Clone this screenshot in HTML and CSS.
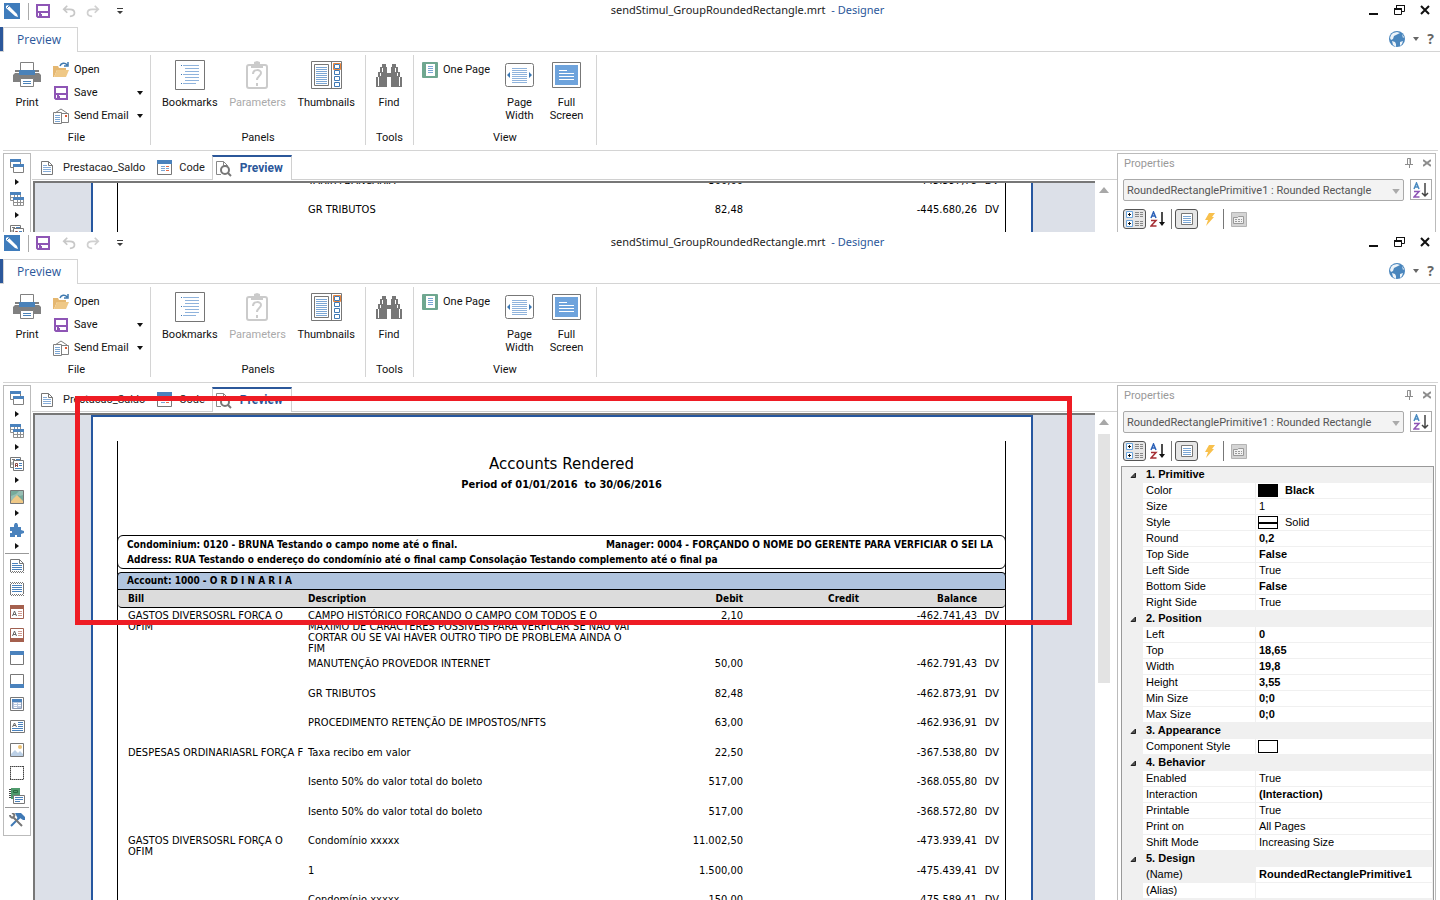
FILE: index.html
```html
<!DOCTYPE html>
<html lang="en">
<head>
<meta charset="utf-8">
<title>sendStimul_GroupRoundedRectangle.mrt - Designer</title>
<link rel="stylesheet" href="styles.css">
<script src="script.js" defer></script>
</head>
<body>
<svg class="sprite" aria-hidden="true">
  <symbol id="i-app" viewBox="0 0 16 16"><path fill="#3f7cbc" d="M0 0h16v16H0z"/><path fill="#fff" d="M2 3l2-1 9 9 1 3-3-1-9-8z"/><path stroke="#3f7cbc" d="M3 5l2-2"/></symbol>
  <symbol id="i-save" viewBox="0 0 16 16"><path fill="none" stroke="#8e55b5" stroke-width="2" d="M2 2h12v12H3l-1-1z"/><path fill="#8e55b5" d="M2 8h12v2H2zM4 10h2v4H4zM6 11h1v3H6z"/></symbol>
  <symbol id="i-undo" viewBox="0 0 16 16"><path fill="none" stroke="#c8c8c8" stroke-width="2" d="M6 2L2 6l4 4M2 6h7c7 0 7 8 0 8"/></symbol>
  <symbol id="i-redo" viewBox="0 0 16 16"><path fill="none" stroke="#d0d0d0" stroke-width="2" d="M10 2l4 4-4 4M14 6H7c-7 0-7 8 0 8"/></symbol>
  <symbol id="i-custom" viewBox="0 0 8 8"><path fill="#3c3c3c" d="M1 1h6v1H1zM1 4h6L4 7z"/></symbol>
  <symbol id="i-min" viewBox="0 0 12 12"><path fill="#111" d="M2 9h9v2H2z"/></symbol>
  <symbol id="i-restore" viewBox="0 0 12 12"><path fill="none" stroke="#111" d="M1.500 4.500h7v6h-7zM3.500 4V1.500h8v6H9"/><path fill="#111" d="M1 4h8v2H1zM3 1h9v1H3z"/></symbol>
  <symbol id="i-close" viewBox="0 0 12 12"><path fill="none" stroke="#111" stroke-width="2" d="M2 2l8 8M10 2l-8 8"/></symbol>
  <symbol id="i-globe" viewBox="0 0 16 16"><circle cx="8" cy="8" r="8" fill="#4a86bd"/><path fill="#eef4f9" d="M2 4l2-2 4-1 3 1-2 1-2 1-2 1-1 3-2 1-1-2zM3 10l3 1 1 2v3l-3-2zM11 11l3-1-1 3-2 2zM13 3l2 3-1 1z"/></symbol>
  <symbol id="i-print" viewBox="0 0 28 26"><path fill="#808080" d="M0 13l2-2h24l2 2v7H0zM2 10h4V8H2zM22 10h4V8h-4z"/><path fill="#fff" stroke="#808080" d="M7.500.5h13v9h-13z"/><path fill="#4a82b9" d="M6 8h16v5H6z"/><path fill="#fff" stroke="#808080" d="M7.500 16.500h13v8h-13z"/><path fill="#4a82b9" d="M10 19h8v1h-8zM10 21h8v1h-8z"/></symbol>
  <symbol id="i-open" viewBox="0 0 16 16"><path fill="#e5b770" d="M0 4h5l1 2h7v2H4L1 15H0z"/><path fill="#efc886" d="M4 8h12l-3 7H1z"/><path fill="none" stroke="#3f79b0" stroke-width="1.500" d="M7 4c1-3 5-4 7-1M15 0v4h-4"/></symbol>
  <symbol id="i-mail" viewBox="0 0 16 16"><path fill="none" stroke="#808080" d="M2 5l6-4 6 4M9 5.500h6.500v9H9M.5 4.500h8v11h-8z"/><path stroke="#7ba6d4" d="M2 7.500h5M2 9.500h5M2 11.500h5M2 13.500h5"/><path fill="#e05a33" d="M12 7h2v2h-2z"/></symbol>
  <symbol id="i-bookmarks" viewBox="0 0 30 30"><path fill="#fff" stroke="#757575" d="M.5.5h29v29H.5z"/><path stroke="#8fb3dc" d="M8 5.500h16M10 8.500h14M10 11.500h14M8 14.500h16M10 17.500h14M10 20.500h14M8 23.500h13"/><path stroke="#3b77b3" d="M6 5.500h1M6 14.500h1M6 23.500h1"/></symbol>
  <symbol id="i-params" viewBox="0 0 22 28"><rect x="1" y="4" width="20" height="23" rx="2" fill="none" stroke="#cbcbcb" stroke-width="2"/><path fill="#cbcbcb" d="M5 4h3V1l3-1 3 1v3h3v3H5z"/><path fill="none" stroke="#cbcbcb" stroke-width="2" d="M7 13c0-5 8-5 8-1 0 3-4 3-4 7M11 22v3"/></symbol>
  <symbol id="i-thumbs" viewBox="0 0 31 28"><path fill="#fff" stroke="#777" d="M.5.5h30v27H.5zM20.500.5v27M3.500 3.500h14v21h-14z"/><path stroke="#7ba6d4" d="M5 6.500h11M5 8.500h11M5 10.500h11M5 12.500h11M5 14.500h11M5 16.500h11M5 18.500h11M5 20.500h11M5 22.500h11"/><path fill="#fff" stroke="#3f79b5" d="M23.500 3.500h5v4h-5zM23.500 9.500h5v4h-5zM23.500 15.500h5v4h-5zM23.500 21.500h5v4h-5z"/><path fill="none" stroke="#e8833a" d="M22.500 2.500h7v6h-7z"/></symbol>
  <symbol id="i-find" viewBox="0 0 26 24"><path fill="#777" d="M6 1h4v3h1v6h4V4h1V1h4v3h2v5h2v5h2v10H15V14h-4v10H0V14h2V9h2V4h2z"/><path fill="none" stroke="#fff" d="M6.500 5v4M4.500 10v3M2.500 14v9M19.500 5v4M21.500 10v3M23.500 14v9"/></symbol>
  <symbol id="i-onepage" viewBox="0 0 16 16"><rect width="16" height="16" rx="1" fill="#6fa790"/><path fill="#fff" d="M4 2h9v12H4z"/><path stroke="#7ba6d4" d="M6 4.500h5M6 6.500h5M6 8.500h5M6 10.500h5"/></symbol>
  <symbol id="i-width" viewBox="0 0 29 24"><rect x=".5" y=".5" width="28" height="23" rx="2" fill="#fff" stroke="#777"/><path stroke="#8fb3dc" d="M7 5.500h15M7 7.500h15M7 9.500h15M7 11.500h15M7 13.500h15M7 15.500h15M7 17.500h15M7 19.500h15"/><path fill="#3b77b3" d="M5 9v6l-3-3zM24 9v6l3-3z"/></symbol>
  <symbol id="i-full" viewBox="0 0 29 26"><path fill="#fff" stroke="#777" d="M.5.5h28v25H.5z"/><path fill="#6ea3dc" d="M3 3h23v20H3z"/><path stroke="#fff" d="M7 8.500h8M7 11.500h15M7 14.500h15M7 17.500h15"/></symbol>
  <symbol id="i-doc" viewBox="0 0 12 14"><path fill="#fff" stroke="#777" d="M.5.5h7l4 4v9H.5zM7.500.5v4h4"/><path stroke="#86acd8" d="M2 4.500h4M2 6.500h8M2 8.500h8M2 10.500h8"/></symbol>
  <symbol id="i-code" viewBox="0 0 16 15"><path fill="#fff" stroke="#777" d="M.5.5h14v14H.5z"/><path fill="#4a82bd" d="M0 0h15v4H0z"/><path stroke="#7ba6d4" d="M4 6.500h4M4 8.500h4M4 10.500h4"/><path stroke="#e36b48" d="M9 6.500h3M9 10.500h3"/><path stroke="#7ba6d4" d="M9 8.500h3"/></symbol>
  <symbol id="i-preview" viewBox="0 0 16 16"><path fill="#fff" stroke="#888" d="M5 13.500H.5V.5h7l4 4V6M7.500.5v4h4"/><circle cx="9" cy="9" r="4" fill="#fff" stroke="#777" stroke-width="2"/><path stroke="#777" stroke-width="2" d="M12 12l3 3"/></symbol>
  <symbol id="i-bands" viewBox="0 0 14 14"><path fill="#fff" stroke="#808080" d="M.5.5h10v8H.5z"/><path fill="#4a82bd" d="M0 0h11v3H0z"/><path fill="#fff" stroke="#808080" d="M3.500 5.500h10v8h-10z"/><path fill="#4a82bd" d="M3 5h11v3H3z"/></symbol>
  <symbol id="i-tables" viewBox="0 0 14 14"><path fill="#fff" stroke="#909090" d="M.5.5h10v8H.5zM0 5.500h10M4.500 3v6M7.500 3v6"/><path fill="#4a82bd" d="M0 0h11v3H0z"/><path fill="#fff" stroke="#909090" d="M3.500 5.500h10v8h-10zM3 10.500h10M7.500 8v6M10.500 8v6"/><path fill="#4a82bd" d="M3 5h11v3H3z"/></symbol>
  <symbol id="i-comps" viewBox="0 0 14 14"><path fill="#fff" stroke="#777" d="M.5.5h10v10H.5zM2 2.500h3M2 5v3"/><path stroke="#4a82bd" d="M6 2.500h4"/><path fill="#fff" stroke="#777" d="M3.500 3.500h10v10h-10z"/><path fill="none" stroke="#8b4b45" d="M5.500 10V6.500h2V10M5 8.500h3"/><path stroke="#4a82bd" d="M9 6.500h3M9 8.500h3M5 11.500h7"/></symbol>
  <symbol id="i-image" viewBox="0 0 14 14"><path fill="#76aa9b" stroke="#777" d="M.5.5h13v13H.5z"/><path fill="#fff" d="M1 6l5-2 3-3h4v4l-3 1-2-1-4 4-3 1z" opacity=".25"/><path fill="#efc886" d="M1 13v-2l6-6 6 6v2z"/></symbol>
  <symbol id="i-puzzle" viewBox="0 0 14 14"><path fill="#4a82bd" d="M0 4h4V2l1-2h2l1 2v2h3v3l3 1v2l-3 1v3H7v-2H5v2H0v-4h2V8H0z"/></symbol>
  <symbol id="i-text" viewBox="0 0 14 14"><path fill="#fff" stroke="#777" d="M.5 12V.5h9l4 4V12M9.500.5v4h4"/><path stroke="#4a82bd" d="M2 4.500h6M2 6.500h10M2 8.500h10M2 10.500h10"/><path stroke="#777" stroke-dasharray="1 1" d="M0 12.500h14M1 13.500h13"/></symbol>
  <symbol id="i-text2" viewBox="0 0 14 14"><path fill="#fff" stroke="#777" d="M.5 2v10M13.500 2v10"/><path stroke="#777" stroke-dasharray="1 1" d="M0 .5h14M1 1.500h13M0 12.500h14M1 13.500h13"/><path stroke="#4a82bd" d="M2 3.500h10M2 5.500h10M2 7.500h10M2 9.500h10"/></symbol>
  <symbol id="i-head" viewBox="0 0 14 14"><path fill="#fff" stroke="#a06050" d="M.5.5h13v13H.5z"/><path fill="#a5604e" d="M0 0h14v4H0z"/><path fill="none" stroke="#666" d="M2.500 11l2-5 2 5M3 9.500h3"/><path stroke="#cf9d92" d="M8 6.500h4M8 8.500h4M8 10.500h4"/></symbol>
  <symbol id="i-foot" viewBox="0 0 14 14"><path fill="#fff" stroke="#a06050" d="M.5.5h13v13H.5z"/><path fill="#a5604e" d="M0 10h14v4H0z"/><path fill="none" stroke="#666" d="M2.500 8l2-5 2 5M3 6.500h3"/><path stroke="#cf9d92" d="M8 3.500h4M8 5.500h4M8 7.500h4"/></symbol>
  <symbol id="i-ptop" viewBox="0 0 14 14"><path fill="#fff" stroke="#777" d="M.5.5h13v13H.5z"/><path fill="#4a82bd" d="M0 0h14v4H0z"/></symbol>
  <symbol id="i-pbot" viewBox="0 0 14 14"><path fill="#fff" stroke="#777" d="M.5.5h13v13H.5z"/><path fill="#4a82bd" d="M0 10h14v4H0z"/></symbol>
  <symbol id="i-panel" viewBox="0 0 14 14"><path fill="#fff" stroke="#777" d="M.5.5h13v13H.5z"/><path fill="#b9c8e0" stroke="#8a9bb5" d="M2.500 3.500h9v8h-9z"/><path fill="#4a82bd" d="M2 2h10v3H2z"/><path stroke="#fff" d="M4 6.500h3M8 6.500h3M4 8.500h3M8 8.500h3M4 10.500h3"/></symbol>
  <symbol id="i-rich" viewBox="0 0 15 13"><path fill="#fff" stroke="#777" d="M.5.5h14v12H.5z"/><path fill="none" stroke="#666" d="M2.500 7l2-4 2 4M3 5.500h3"/><path stroke="#4a82bd" d="M8 2.500h5M8 4.500h5M8 6.500h5M2 8.500h11M2 10.500h11"/></symbol>
  <symbol id="i-photo" viewBox="0 0 14 14"><path fill="#fff" stroke="#777" d="M.5.5h13v13H.5z"/><circle cx="10" cy="4" r="2" fill="#ecc274"/><path fill="#bcd0e6" d="M1 13v-2l4-4 3 3 2-2 3 3v2z"/></symbol>
  <symbol id="i-shape" viewBox="0 0 14 14"><path fill="#fff" stroke="#999" d="M.5.5h13v13H.5z"/><path fill="none" stroke="#444" stroke-dasharray="1 1" d="M0 .5h14M0 13.500h14M.5 0v14M13.500 0v14"/></symbol>
  <symbol id="i-sub" viewBox="0 0 16 16"><path fill="#4f9a6c" d="M2 0h9v11H2z"/><path fill="none" stroke="#2e6b45" d="M4.500 2.500h4v2h-4z"/><path stroke="#444" stroke-dasharray="1 1" d="M.5 1v10M1.500 1v10"/><path fill="#fff" stroke="#777" d="M4.500 7.500h11v8h-11z"/><path stroke="#4a82bd" d="M6 9.500h8M6 11.500h8M6 13.500h5"/></symbol>
  <symbol id="i-tools" viewBox="0 0 16 14"><path stroke="#3f79b5" stroke-width="2" d="M2 13l9-9"/><path fill="#3f79b5" d="M6 0h6l4 4v3h-2l-3-2-2 1-2-4z"/><path fill="none" stroke="#777" stroke-width="2" d="M4 4l9 9M1 2c0 3 3 3 4 2M3 0c3 1 3 3 1 4"/></symbol>
  <symbol id="i-right" viewBox="0 0 4 6"><path fill="#111" d="M0 0l4 3-4 3z"/></symbol>
  <symbol id="i-down" viewBox="0 0 6 4"><path fill="currentColor" d="M0 0h6L3 4z"/></symbol>
  <symbol id="i-up" viewBox="0 0 10 6"><path fill="#a8a8a8" d="M0 6h10L5 0z"/></symbol>
  <symbol id="i-pin" viewBox="0 0 8 10"><path fill="none" stroke="#8d8d8d" d="M2.500 6V.5h3V6M0 6.500h8M4.500 7v3M5 .5v5"/></symbol>
  <symbol id="i-x" viewBox="0 0 8 8"><path stroke="#8d8d8d" stroke-width="2" d="M0 1l8 6M8 1L0 7"/></symbol>
  <symbol id="i-cat" viewBox="0 0 18 16"><path fill="#fff" stroke="#6ba5dd" d="M.5.5h6v6h-6zM.5 9.500h6v6h-6z"/><path stroke="#111" d="M2 3.500h3M3.500 2v3M2 12.500h3M3.500 11v3"/><path stroke="#888" stroke-dasharray="4 1" d="M9 1.500h8M9 3.500h8M9 5.500h8M9 10.500h8M9 12.500h8M9 14.500h8"/></symbol>
  <symbol id="i-sort" viewBox="0 0 16 16"><path fill="none" stroke="#2d62b8" stroke-width="1.500" d="M1 7l2.500-6L6 7M2 5h3"/><path fill="none" stroke="#a62f35" stroke-width="1.500" d="M1 9.500h5L1 15h5.500"/><path stroke="#111" stroke-width="1.500" d="M12 1v12"/><path fill="#111" d="M9 11h6l-3 4z"/></symbol>
  <symbol id="i-sort2" viewBox="0 0 16 16"><path fill="none" stroke="#4a8ac0" stroke-width="1.500" d="M1 7l2.500-6L6 7M2 5h3"/><path fill="none" stroke="#8e55b5" stroke-width="1.500" d="M1 9.500h5L1 15h5.500"/><path fill="none" stroke="#444" stroke-width="1.500" d="M12 1v13M9 11l3 3 3-3"/></symbol>
  <symbol id="i-list" viewBox="0 0 12 12"><path fill="#fff" stroke="#777" d="M.5.5h11v11H.5z"/><path stroke="#7ba6d4" d="M2 3.500h8M2 5.500h8M2 7.500h8M2 9.500h8"/></symbol>
  <symbol id="i-bolt" viewBox="0 0 10 13"><path fill="#f8c04c" d="M4 0h6L7 4h2L1 13l2-6H0z"/></symbol>
  <symbol id="i-page" viewBox="0 0 16 15"><path fill="#d4d4d4" stroke="#b4b4b4" d="M.5.5h15v14H.5z"/><path fill="#f1f1f1" stroke="#999" d="M2.500 5.500h4l1-1h5v7h-10z"/><path stroke="#999" stroke-dasharray="2 1" d="M4 7.500h7M4 9.500h7"/></symbol>
  <symbol id="i-tri" viewBox="0 0 6 6"><path fill="#555" stroke="#222" d="M5.500 1v4.500H1z"/></symbol>
</svg>

<template id="chrome">
  <header class="titlebar">
    <div class="quick">
      <svg width="16" height="16"><use href="#i-app"/></svg><i class="bar"></i>
      <button aria-label="Save"><svg width="16" height="16"><use href="#i-save"/></svg></button>
      <button aria-label="Undo"><svg width="14" height="14"><use href="#i-undo"/></svg></button>
      <button aria-label="Redo"><svg width="14" height="14"><use href="#i-redo"/></svg></button>
      <button aria-label="Customize"><svg width="8" height="8"><use href="#i-custom"/></svg></button>
    </div>
    <h1 class="title">sendStimul_GroupRoundedRectangle.mrt <span>&nbsp;- Designer</span></h1>
    <div class="winbtns">
      <button aria-label="Minimize"><svg width="12" height="12"><use href="#i-min"/></svg></button>
      <button aria-label="Restore"><svg width="12" height="12"><use href="#i-restore"/></svg></button>
      <button aria-label="Close"><svg width="12" height="12"><use href="#i-close"/></svg></button>
    </div>
  </header>
  <div class="ribbon-tabs">
    <i class="filetab"></i><button class="rtab">Preview</button>
    <div class="rhelp"><button aria-label="Language"><svg width="16" height="16"><use href="#i-globe"/></svg><svg width="6" height="4"><use href="#i-down"/></svg></button><button class="help">?</button></div>
  </div>
  <div class="ribbon">
    <section class="group g-file">
      <div class="tools">
        <button class="big print"><svg width="28" height="26"><use href="#i-print"/></svg>Print</button>
        <div class="stack">
          <button><svg width="16" height="16"><use href="#i-open"/></svg>Open</button>
          <button><svg width="16" height="16"><use href="#i-save"/></svg>Save<svg class="drop" width="6" height="4"><use href="#i-down"/></svg></button>
          <button><svg width="16" height="16"><use href="#i-mail"/></svg>Send Email<svg class="drop" width="6" height="4"><use href="#i-down"/></svg></button>
        </div>
      </div>
      <h2>File</h2>
    </section>
    <section class="group g-panels">
      <div class="tools">
        <button class="big"><svg width="30" height="30"><use href="#i-bookmarks"/></svg>Bookmarks</button>
        <button class="big" disabled><svg width="22" height="28"><use href="#i-params"/></svg>Parameters</button>
        <button class="big"><svg width="31" height="28"><use href="#i-thumbs"/></svg>Thumbnails</button>
      </div>
      <h2>Panels</h2>
    </section>
    <section class="group g-tools">
      <div class="tools"><button class="big"><svg width="26" height="24"><use href="#i-find"/></svg>Find</button></div>
      <h2>Tools</h2>
    </section>
    <section class="group g-view">
      <div class="tools">
        <div class="stack"><button><svg width="16" height="16"><use href="#i-onepage"/></svg>One Page</button></div>
        <button class="big"><svg width="29" height="24"><use href="#i-width"/></svg>Page<br>Width</button>
        <button class="big"><svg width="29" height="26"><use href="#i-full"/></svg>Full<br>Screen</button>
      </div>
      <h2>View</h2>
    </section>
  </div>
  <div class="work">
    <nav class="toolbox" aria-label="Toolbox"></nav>
    <main class="center">
      <div class="doctabs">
        <button class="t-doc"><svg width="12" height="14"><use href="#i-doc"/></svg>Prestacao_Saldo</button>
        <button class="t-code"><svg width="16" height="15"><use href="#i-code"/></svg>Code</button>
        <button class="active"><svg width="16" height="16"><use href="#i-preview"/></svg>Preview</button>
      </div>
      <div class="viewrow">
        <div class="viewer"></div>
        <div class="scroll"><svg width="10" height="6"><use href="#i-up"/></svg><i class="thumb"></i></div>
      </div>
    </main>
    <aside class="props">
      <header><h2>Properties</h2><button aria-label="Pin"><svg width="8" height="10"><use href="#i-pin"/></svg></button><button aria-label="Close panel"><svg width="8" height="8"><use href="#i-x"/></svg></button></header>
      <div class="pick">
        <div class="selectbox"><select aria-label="Component"><option>RoundedRectanglePrimitive1 : Rounded Rectangle</option></select><svg width="8" height="5"><use href="#i-down"/></svg></div>
        <button aria-label="Sort components"><svg width="16" height="16"><use href="#i-sort2"/></svg></button>
      </div>
      <div class="ptools">
        <button class="on" aria-label="Categorized"><svg width="18" height="16"><use href="#i-cat"/></svg></button>
        <button aria-label="Alphabetical"><svg width="16" height="16"><use href="#i-sort"/></svg></button>
        <i></i>
        <button class="on" aria-label="Property list"><svg width="12" height="12"><use href="#i-list"/></svg></button>
        <button aria-label="Events"><svg width="10" height="13"><use href="#i-bolt"/></svg></button>
        <i></i>
        <button aria-label="Property pages"><svg width="16" height="15"><use href="#i-page"/></svg></button>
      </div>
    </aside>
  </div>
</template>

<div class="window first">
  <article class="page scrolled">
    <div class="report">
      <table class="rows">
        <colgroup><col class="c-bill"><col class="c-desc"><col class="c-debit"><col class="c-credit"><col class="c-bal"><col class="c-dv"></colgroup>
        <tbody>
          <tr><td></td><td>TARIFA BANCARIA</td><td>300,00</td><td></td><td>-445.597,78</td><td>DV</td></tr>
          <tr><td></td><td>GR TRIBUTOS</td><td>82,48</td><td></td><td>-445.680,26</td><td>DV</td></tr>
        </tbody>
      </table>
    </div>
  </article>
</div>

<div class="window second">
  <article class="page">
    <div class="report">
      <h2 class="heading">Accounts Rendered</h2>
      <p class="period">Period of 01/01/2016 &nbsp;to 30/06/2016</p>
      <div class="condo">
        <span>Condominium: 0120 - BRUNA Testando o campo nome até o final.</span><span>Manager: 0004 - FORÇANDO O NOME DO GERENTE PARA VERFICIAR O SEI LA</span>
        <span class="wide">Address: RUA Testando o endereço do condomínio até o final camp Consolação Testando complemento até o final pa</span>
      </div>
      <div class="account">Account: 1000 - O R D I N A R I A</div>
      <table class="rows">
        <colgroup><col class="c-bill"><col class="c-desc"><col class="c-debit"><col class="c-credit"><col class="c-bal"><col class="c-dv"></colgroup>
        <thead><tr><th>Bill</th><th>Description</th><th>Debit</th><th>Credit</th><th>Balance</th><th></th></tr></thead>
        <tbody>
          <tr class="tall"><td>GASTOS DIVERSOSRL FORÇA O<br>OFIM</td><td>CAMPO HISTÓRICO FORÇANDO O CAMPO COM TODOS E O<br>MÁXIMO DE CARACTERES POSSIVEIS PARA VERFICAR SE NÃO VAI<br>CORTAR OU SE VAI HAVER OUTRO TIPO DE PROBLEMA AINDA O<br>FIM</td><td>2,10</td><td></td><td>-462.741,43</td><td>DV</td></tr>
          <tr><td></td><td>MANUTENÇÃO PROVEDOR INTERNET</td><td>50,00</td><td></td><td>-462.791,43</td><td>DV</td></tr>
          <tr><td></td><td>GR TRIBUTOS</td><td>82,48</td><td></td><td>-462.873,91</td><td>DV</td></tr>
          <tr><td></td><td>PROCEDIMENTO RETENÇÃO DE IMPOSTOS/NFTS</td><td>63,00</td><td></td><td>-462.936,91</td><td>DV</td></tr>
          <tr><td>DESPESAS ORDINARIASRL FORÇA F</td><td>Taxa recibo em valor</td><td>22,50</td><td></td><td>-367.538,80</td><td>DV</td></tr>
          <tr><td></td><td>Isento 50% do valor total do boleto</td><td>517,00</td><td></td><td>-368.055,80</td><td>DV</td></tr>
          <tr><td></td><td>Isento 50% do valor total do boleto</td><td>517,00</td><td></td><td>-368.572,80</td><td>DV</td></tr>
          <tr><td>GASTOS DIVERSOSRL FORÇA O<br>OFIM</td><td>Condomínio xxxxx</td><td>11.002,50</td><td></td><td>-473.939,41</td><td>DV</td></tr>
          <tr><td></td><td>1</td><td>1.500,00</td><td></td><td>-475.439,41</td><td>DV</td></tr>
          <tr><td></td><td>Condomínio xxxxx</td><td>150,00</td><td></td><td>-475.589,41</td><td>DV</td></tr>
        </tbody>
      </table>
    </div>
  </article>
  <div class="marker"></div>
</div>
</body>
</html>
```

FILE: script.js
```js
const icon = (id, w, h) => `<svg width="${w}" height="${h}"><use href="#i-${id}"/></svg>`;

const menus = [['bands', 'Bands'], ['tables', 'Cross bands'], ['comps', 'Components'], ['image', 'Images'], ['puzzle', 'Plugins']];
const items = [['text', 'Report title'], ['text2', 'Page band'], ['head', 'Header'], ['foot', 'Footer'], ['ptop', 'Page header'],
  ['pbot', 'Page footer'], ['panel', 'Panel'], ['rich', 'Text', 15, 13], ['photo', 'Image'], ['shape', 'Shape'], ['sub', 'Sub-report', 16, 16]];

// Each row: name, value, bold, swatch
const groups = [
  ['1. Primitive', [['Color', 'Black', 1, 'fill'], ['Size', '1'], ['Style', 'Solid', 0, 'line'], ['Round', '0,2', 1], ['Top Side', 'False', 1],
    ['Left Side', 'True'], ['Bottom Side', 'False', 1], ['Right Side', 'True']]],
  ['2. Position', [['Left', '0', 1], ['Top', '18,65', 1], ['Width', '19,8', 1], ['Height', '3,55', 1], ['Min Size', '0;0', 1], ['Max Size', '0;0', 1]]],
  ['3. Appearance', [['Component Style', '', 0, 'empty']]],
  ['4. Behavior', [['Enabled', 'True'], ['Interaction', '(Interaction)', 1], ['Printable', 'True'], ['Print on', 'All Pages'], ['Shift Mode', 'Increasing Size']]],
  ['5. Design', [['(Name)', 'RoundedRectanglePrimitive1', 1], ['(Alias)', '']]],
];

const toolbox = menus.map(([id, label]) => `<button class="menu" aria-label="${label}">${icon(id, 14, 14)}${icon('right', 4, 6)}</button>`).join('')
  + '<hr>' + items.map(([id, label, w = 14, h = 14]) => `<button aria-label="${label}">${icon(id, w, h)}</button>`).join('')
  + '<hr>' + `<button aria-label="Toolbox settings">${icon('tools', 16, 14)}</button>`;

const grid = '<div class="grid"><table class="ptable"><colgroup><col class="p-gut"><col class="p-name"><col></colgroup>' + groups.map(([title, rows]) =>
  `<tbody><tr class="ghead"><td>${icon('tri', 6, 6)}</td><th colspan="2">${title}</th></tr>`
  + rows.map(([name, value, bold, swatch]) => `<tr class="${name === '(Name)' ? 'sel' : ''}"><td></td><th>${name}</th><td class="${bold ? 'bold' : ''}">`
    + (swatch ? `<i class="swatch ${swatch}"></i>` : '') + `${value}</td></tr>`).join('') + '</tbody>').join('') + '</table></div>';

document.querySelectorAll('.window').forEach((win) => {
  const page = win.querySelector('.page');
  win.prepend(document.getElementById('chrome').content.cloneNode(true));
  win.querySelector('.toolbox').innerHTML = toolbox;
  win.querySelector('.viewer').append(page);
});
document.querySelector('.second .props').insertAdjacentHTML('beforeend', grid);
```

FILE: styles.css
```css
* { box-sizing: border-box; }
body { margin: 0; height: 100vh; display: flex; flex-direction: column; overflow: hidden; background: #fff; color: #111; font: 11px/13px "Liberation Sans", Arial, sans-serif; }
h1, h2, p { margin: 0; font-size: inherit; font-weight: normal; }
svg { display: block; flex: none; }
button { display: flex; align-items: center; justify-content: center; margin: 0; padding: 0; border: 0; background: none; color: inherit; font: inherit; }
table { border-collapse: separate; border-spacing: 0; table-layout: fixed; width: 100%; }
th, td { padding: 0; font-weight: normal; text-align: left; }
.sprite { position: absolute; width: 0; height: 0; }

.window { position: relative; display: flex; flex-direction: column; overflow: hidden; }
.first { flex: 0 0 232px; }
.second { flex: 1; min-height: 0; }

.titlebar { display: grid; grid-template-columns: 1fr auto 1fr; align-items: start; flex: 0 0 24px; padding: 0 9px 0 4px; }
.title { margin-left: 60px; color: #222; font: 11px/20px "Noto Sans", "Open Sans", sans-serif; }
.title span { color: #2b579a; }
.quick { display: flex; align-items: center; height: 22px; }
.quick .bar { width: 1px; height: 17px; margin: 0 6px 0 8px; background: #aaa; }
.quick button { margin-right: 11px; }
.quick button:nth-of-type(2) { margin-right: 10px; }
.quick button:nth-of-type(3) { margin-right: 16px; }
.winbtns { display: flex; justify-content: flex-end; gap: 14px; height: 20px; }

.ribbon-tabs { display: flex; flex: 0 0 28px; padding: 3px 0 0; border-bottom: 1px solid #d4d4d4; }
.filetab { width: 3px; background: #2b579a; }
.rtab { width: 75px; height: 25px; margin-bottom: -1px; padding-right: 3px; border: 1px solid #d4d4d4; border-bottom: 0; background: #fff; color: #2b579a; font: 12px/16px "Open Sans", sans-serif; }
.rhelp { display: flex; align-items: center; gap: 8px; margin-left: auto; padding-right: 6px; color: #666; }
.rhelp button:first-child { gap: 8px; }
.help { font: bold 14px/14px "Open Sans", sans-serif; }

.ribbon { display: flex; flex: 0 0 99px; padding: 3px 0 5px; border-bottom: 1px solid #d4d4d4; margin: 0 2px 0 3px; font-family: Roboto, sans-serif; }
.group { display: flex; flex-direction: column; justify-content: space-between; border-right: 1px solid #d4d4d4; }
.group h2 { text-align: center; line-height: 14px; }
.tools { display: flex; align-items: flex-start; }
.big { flex-direction: column; line-height: 13px; }
.big svg { margin-bottom: 6px; }
.big { height: 68px; justify-content: flex-start; padding-top: 5px; }
.big:disabled { color: #aaa; }
.stack { display: flex; flex-direction: column; align-items: stretch; }
.stack button { justify-content: flex-start; height: 23px; gap: 5px; }
.drop { margin-left: auto; }
.g-file { width: 148px; }
.print { width: 48px; padding-top: 7px; }
.print svg { margin-bottom: 8px; }
.g-file .stack { flex: 1; padding: 3px 7px 0 2px; }
.g-panels { width: 215px; }
.g-panels .tools { padding: 0 10px 0 11px; justify-content: space-between; }
.g-panels .big svg { height: 30px; }
.g-tools { width: 48px; }
.g-tools .big { width: 46px; padding-top: 8px; }
.g-tools .big svg { margin-bottom: 9px; }
.g-view { width: 183px; }
.g-view .tools { padding-left: 8px; }
.g-view .stack { width: 74px; padding-top: 3px; }
.g-view .big { width: 47px; padding-top: 7px; }
.g-view .big svg { height: 26px; margin-bottom: 8px; }

.work { display: flex; flex: 1; min-height: 0; padding: 2px 4px 0 3px; }
.toolbox { align-self: flex-start; display: flex; flex-direction: column; width: 28px; height: 451px; padding: 2px 1px; border: 1px solid #bbb; }
.toolbox button { height: 23px; flex: none; }
.toolbox .menu { flex-direction: column; height: 33px; gap: 6px; justify-content: flex-start; padding-top: 3px; }
.toolbox hr { width: 100%; height: 1px; margin: 0; border: 0; background: #999; flex: none; }

.center { flex: 1; min-width: 0; display: flex; flex-direction: column; margin-left: 1px; }
.doctabs { display: flex; align-items: flex-end; height: 27px; border-bottom: 1px solid #d0d0d0; font-family: Roboto, sans-serif; color: #222; }
.doctabs button { height: 23px; white-space: nowrap; }
.t-doc { gap: 10px; padding: 0 12px 0 9px; }
.t-code { gap: 6px; padding-right: 7px; }
.doctabs .active { height: 25px; margin-bottom: -1px; gap: 8px; padding: 0 8px 0 3px; border: 1px solid #d0d0d0; border-top: 2px solid #2b579a; border-bottom: 0; background: #fff; color: #2b579a; font-size: 12px; font-weight: bold; }
.viewrow { display: flex; flex: 1; min-height: 0; padding-left: 1px; }
.viewer { flex: 1; overflow: hidden; margin-top: 1px; border-top: 2px solid #777; border-left: 2px solid #777; background: #dce0e8; }
.scroll { width: 17px; margin-right: 5px; padding: 7px 3px 0 4px; display: flex; flex-direction: column; align-items: center; }
.scroll .thumb { width: 12px; height: 249px; margin-top: 9px; flex: none; background: #e3e3e3; }
.first .thumb { display: none; }

.page { height: 1300px; margin: 0 62px 0 56px; padding: 24px 25px 0 24px; border: 2px solid #2657a0; background: #fff; color: #000; font: 10px/11px "DejaVu Sans Condensed", "DejaVu Sans", sans-serif; }
.page.scrolled { border-top: 0; padding-top: 0; }
.report { height: 100%; border: solid #000; border-width: 0 1px; }
.scrolled .rows { margin-top: -10px; }
.heading { padding-top: 13px; text-align: center; font: 15px/20px "DejaVu Sans", sans-serif; }
.period { height: 61px; padding-top: 5px; text-align: center; font-size: 11px; font-weight: bold; }
.condo { display: grid; grid-template-columns: auto auto; justify-content: space-between; row-gap: 1px; margin: 0 -1px 3px; padding: 2px 12px 1px 9px; border: 1px solid #000; border-radius: 6px; font-weight: bold; line-height: 14px; white-space: nowrap; }
.condo .wide { grid-column: 1 / 3; }
.account { margin: 0 -1px; padding: 0 9px; border: 1px solid #000; border-radius: 4px 4px 0 0; background: #b0c4de; font-weight: bold; line-height: 16px; }
.rows th { height: 18px; border-bottom: 1px solid #000; background: #dcdcdc; font-weight: bold; vertical-align: middle; }
.rows th:first-child { border-bottom-left-radius: 4px; }
.rows th:last-child { border-bottom-right-radius: 4px; }
.rows td { height: 30px; padding-top: 2px; vertical-align: top; white-space: nowrap; font-size: 11px; }
.rows tr:nth-child(odd) td { height: 29px; }
.rows .tall:nth-child(odd) td { height: 48px; }
.rows td:first-child, .rows th:first-child { padding-left: 10px; }
.rows td:nth-child(n+3), .rows th:nth-child(n+3) { text-align: right; }
.rows td:last-child { padding-right: 6px; }
.c-bill { width: 190px; }
.c-debit { width: 120px; }
.c-credit { width: 116px; }
.c-bal { width: 118px; }
.c-dv { width: 28px; }

.props { width: 319px; display: flex; flex-direction: column; border: 1px solid #bbb; border-bottom: 0; color: #555; }
.props header { display: flex; align-items: center; gap: 10px; height: 18px; padding: 0 4px 0 6px; flex: none; font-family: Roboto, sans-serif; }
.props header h2 { flex: 1; color: #999; }
.pick { display: flex; justify-content: space-between; height: 22px; margin-top: 7px; padding: 0 3px 0 5px; flex: none; }
.selectbox { position: relative; flex: 1; margin-right: 6px; color: #aaa; }
.selectbox select { appearance: none; width: 100%; height: 22px; padding: 0 3px; border: 1px solid #aaa; border-radius: 2px; background: #f3f3f3; color: #555; font: 11px/13px Roboto, sans-serif; }
.selectbox svg { position: absolute; right: 4px; top: 10px; }
.pick button { width: 22px; height: 21px; border: 1px solid #aaa; }
.ptools { display: flex; align-items: center; height: 22px; margin-top: 7px; padding-left: 5px; flex: none; }
.ptools button { width: 23px; height: 20px; }
.ptools .on { border: 1px solid #555; border-radius: 3px; background: #e6e6e6; }
.ptools i { width: 1px; height: 20px; margin: 0 3px 0 2px; background: #777; }
.grid { flex: 1; min-height: 0; overflow: hidden; margin: 4px 1px 0 3px; border: 1px solid #999; border-bottom: 0; background: #f0f0f0; }
.ptable { color: #000; line-height: 15px; }
.ptable tr > * { height: 16px; white-space: nowrap; }
.p-gut { width: 21px; }
.p-name { width: 113px; }
.ptable tr > :not(:first-child) { padding-left: 3px; background: #fff; border-bottom: 1px solid #f0f0f0; border-right: 1px solid #f0f0f0; }
.ptable .ghead > :not(:first-child) { background: #f0f0f0; font-weight: bold; }
.ptable .sel th:not(:first-child) { background: #f0f0f0; }
.ghead svg { margin-left: 8px; }
.ptable .bold { font-weight: bold; }
.swatch { display: inline-block; width: 20px; height: 13px; margin: 1px 7px 0 -1px; border: 1px solid #000; vertical-align: top; }
.swatch.fill { background: #000; }
.swatch.line { background: linear-gradient(#000, #000) center / 100% 2px no-repeat; }

.marker { position: absolute; top: 164px; left: 75px; right: 368px; height: 229px; border: 5px solid #ee1c24; pointer-events: none; }
```
